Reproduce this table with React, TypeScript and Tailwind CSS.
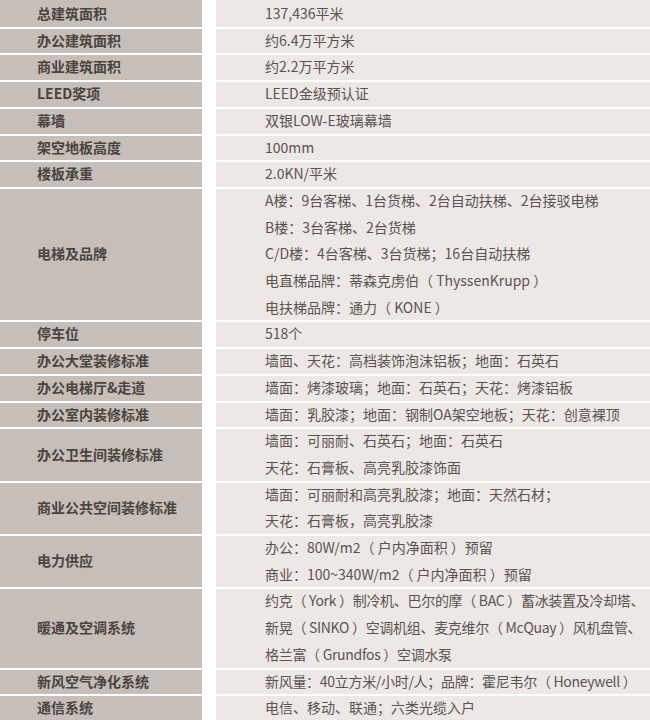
import React from 'react';

type Row = { label: string; lines: string[]; tight?: boolean };

const rows: Row[] = [
  { label: '总建筑面积', lines: ['137,436平米'] },
  { label: '办公建筑面积', lines: ['约6.4万平方米'] },
  { label: '商业建筑面积', lines: ['约2.2万平方米'] },
  { label: 'LEED奖项', lines: ['LEED金级预认证'] },
  { label: '幕墙', lines: ['双银LOW-E玻璃幕墙'] },
  { label: '架空地板高度', lines: ['100mm'] },
  { label: '楼板承重', lines: ['2.0KN/平米'] },
  {
    label: '电梯及品牌',
    lines: [
      'A楼：9台客梯、1台货梯、2台自动扶梯、2台接驳电梯',
      'B楼：3台客梯、2台货梯',
      'C/D楼：4台客梯、3台货梯；16台自动扶梯',
      '电直梯品牌：蒂森克虏伯（ ThyssenKrupp ）',
      '电扶梯品牌：通力（ KONE ）',
    ],
  },
  { label: '停车位', lines: ['518个'] },
  { label: '办公大堂装修标准', lines: ['墙面、天花：高档装饰泡沫铝板；地面：石英石'] },
  { label: '办公电梯厅&走道', lines: ['墙面：烤漆玻璃；地面：石英石；天花：烤漆铝板'] },
  { label: '办公室内装修标准', lines: ['墙面：乳胶漆；地面：钢制OA架空地板；天花：创意裸顶'] },
  { label: '办公卫生间装修标准', lines: ['墙面：可丽耐、石英石；地面：石英石', '天花：石膏板、高亮乳胶漆饰面'] },
  { label: '商业公共空间装修标准', lines: ['墙面：可丽耐和高亮乳胶漆；地面：天然石材；', '天花：石膏板，高亮乳胶漆'] },
  { label: '电力供应', lines: ['办公：80W/m2（ 户内净面积 ）预留', '商业：100~340W/m2（ 户内净面积 ）预留'] },
  {
    label: '暖通及空调系统',
    tight: true,
    lines: [
      '约克（ York ）制冷机、巴尔的摩（ BAC ）蓄冰装置及冷却塔、',
      '新晃（ SINKO ）空调机组、麦克维尔（ McQuay ）风机盘管、',
      '格兰富（ Grundfos ）空调水泵',
    ],
  },
  { label: '新风空气净化系统', tight: true, lines: ['新风量：40立方米/小时/人；品牌：霍尼韦尔（ Honeywell ）'] },
  { label: '通信系统', lines: ['电信、移动、联通；六类光缆入户'] },
];

export default function App() {
  return (
    <div
      className="w-[650px] h-[720px] overflow-hidden bg-white text-[14px] leading-[26.7px]"
      style={{ fontFamily: '"Noto Sans CJK SC", "Noto Sans", sans-serif' }}
    >
      {rows.map((r, i) => (
        <div key={i} className="flex">
          <div
            className={`w-[202px] shrink-0 flex items-center pl-[37px] bg-[#c6bfb9] font-bold text-[#4a4440] ${i > 0 ? 'shadow-[inset_0_2px_0_#ffffff]' : ''}`}
          >
            {r.label}
          </div>
          <div
            className={`ml-[14px] flex-1 min-w-0 overflow-hidden pl-[49px] bg-[#ede7e5] text-[#5a5451] whitespace-nowrap ${r.tight ? 'tracking-[-0.3px]' : ''} ${i > 0 ? 'shadow-[inset_0_2px_0_#ffffff]' : ''}`}
          >
            {r.lines.map((l, j) => (
              <div key={j}>{l}</div>
            ))}
          </div>
        </div>
      ))}
    </div>
  );
}
